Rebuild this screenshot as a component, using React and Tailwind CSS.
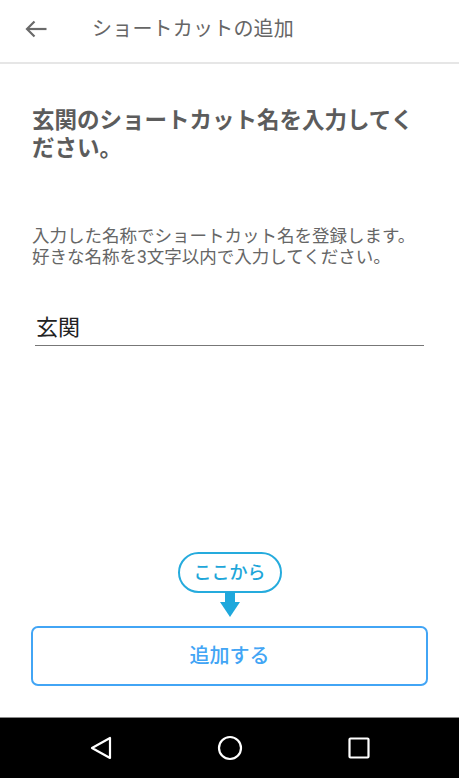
import React from "react";

const FONT = { fontFamily: 'Roboto, "Noto Sans CJK JP", "Noto Sans", sans-serif' };

export default function App() {
  return (
    <div className="w-[459px] h-[778px] bg-white flex flex-col overflow-hidden" style={FONT}>
      {/* Header */}
      <div className="h-[64px] shrink-0 border-b-2 border-[#e6e6e6] flex items-center pb-[4px]">
        <div className="w-[92px] pl-[25px] flex items-center">
          <svg width="22" height="18" viewBox="0 0 22 18" fill="none" stroke="#6a6a6a" strokeWidth="2.2" strokeLinecap="butt" strokeLinejoin="miter">
            <line x1="2" y1="9" x2="21.5" y2="9" />
            <polyline points="9.5,1.5 2,9 9.5,16.5" />
          </svg>
        </div>
        <div className="text-[20px] leading-[24px] text-[#666666] tracking-[0.2px]">ショートカットの追加</div>
      </div>

      {/* Body */}
      <div className="flex-1 flex flex-col px-[32px]">
        <h1 className="mt-[42px] text-[22.5px] leading-[28px] font-bold text-[#5c5c5c]">
          玄関のショートカット名を入力してください。
        </h1>
        <p className="mt-[64px] text-[17.5px] leading-[21px] text-[#666666]">
          入力した名称でショートカット名を登録します。
          <br />
          好きな名称を3文字以内で入力してください。
        </p>
        <div className="mt-[45px] mx-[3px] border-b border-[#777777] pb-[2px]">
          <div className="pl-[1px] text-[22px] leading-[30px] text-[#222222]">玄関</div>
        </div>
      </div>

      {/* Bottom action */}
      <div className="shrink-0 flex flex-col items-center">
        <div className="w-[104px] h-[41px] rounded-full border-[2.5px] border-[#25abdd] flex items-center justify-center text-[18px] leading-[22px] font-medium text-[#1ea6d9]">
          ここから
        </div>
        <svg width="20" height="25" viewBox="0 0 20 25" className="-mt-[1px]">
          <rect x="5" y="0" width="10" height="11" fill="#1fa8dc" />
          <polygon points="0,10 20,10 10,25" fill="#1fa8dc" />
        </svg>
      </div>
      <div className="shrink-0 px-[31px] mt-[9px] mb-[31px]">
        <div className="h-[60px] rounded-[7px] border-2 border-[#42a5f5] flex items-center justify-center text-[20px] leading-[24px] font-medium text-[#42a5f5]">
          追加する
        </div>
      </div>

      {/* Nav bar */}
      <div className="h-[61px] shrink-0 bg-black border-t border-[#8a8a8a] flex items-center justify-center gap-[105px]">
        <svg width="22" height="24" viewBox="0 0 22 24" fill="none" stroke="white" strokeWidth="2.2" strokeLinejoin="round">
          <polygon points="20,2 20,22 2,12" />
        </svg>
        <svg width="26" height="26" viewBox="0 0 26 26" fill="none" stroke="white" strokeWidth="2.2">
          <circle cx="13" cy="13" r="11" />
        </svg>
        <svg width="22" height="22" viewBox="0 0 22 22" fill="none" stroke="white" strokeWidth="2.2">
          <rect x="1.5" y="1.5" width="19" height="19" rx="1" />
        </svg>
      </div>
    </div>
  );
}
